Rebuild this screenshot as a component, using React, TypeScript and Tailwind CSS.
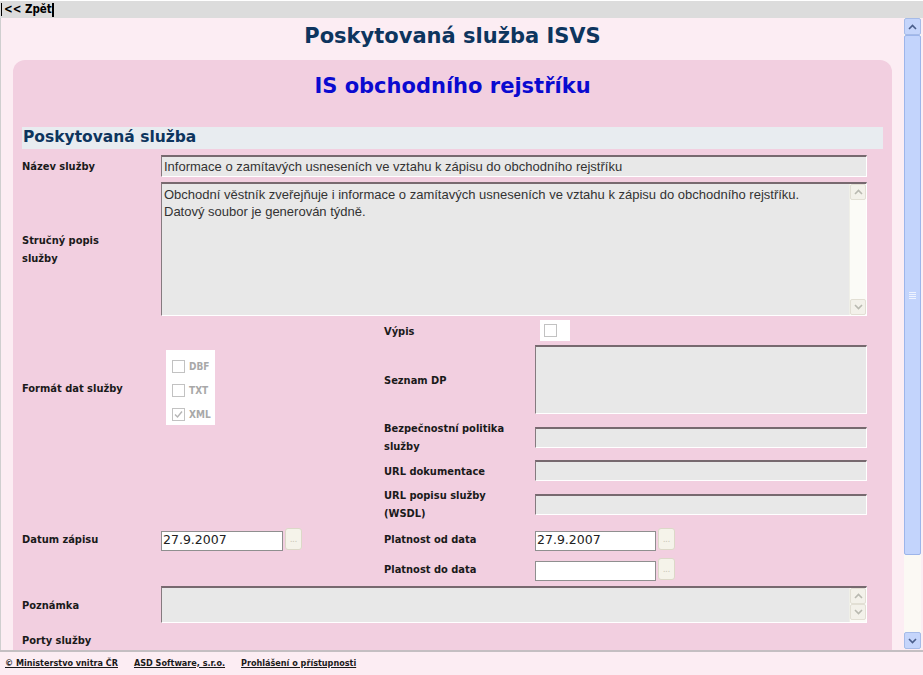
import React from 'react';

const lbl =
  "font-['DejaVu_Sans_Condensed','DejaVu_Sans',sans-serif] font-bold text-[11px] leading-[18px] text-[#1a1a1a] pt-[2px]";
const grayBox =
  'bg-[#e8e8e8] border-t-2 border-l border-b border-r border-t-[#77696f] border-l-[#857a7f] border-b-white border-r-white';

function Chevron({ up, color = '#b9b9b0' }: { up?: boolean; color?: string }) {
  return (
    <svg width="9" height="6" viewBox="0 0 9 6">
      <path
        d={up ? 'M1 5 L4.5 1.5 L8 5' : 'M1 1 L4.5 4.5 L8 1'}
        fill="none"
        stroke={color}
        strokeWidth="1.6"
      />
    </svg>
  );
}

// disabled scroll bar inside a textarea
function InnerScroll({ split }: { split?: boolean }) {
  return (
    <div className="w-[17px] flex flex-col bg-[#fbfbf7] border-l border-[#efefe8]">
      <div className="h-[16px] flex items-center justify-center bg-[#f3f1ea] border border-[#e2dfd4] rounded-[2px]">
        <Chevron up />
      </div>
      {!split && <div className="flex-1" />}
      <div className="h-[16px] flex items-center justify-center bg-[#f3f1ea] border border-[#e2dfd4] rounded-[2px]">
        <Chevron />
      </div>
    </div>
  );
}

function DateField({ value, w }: { value: string; w: string }) {
  return (
    <div className="flex items-start gap-[2px]">
      <div
        className={`${w} h-[20px] mt-[3px] bg-white border border-[#8f8f8f] px-[1px] flex items-center font-['DejaVu_Sans',sans-serif] text-[12.5px] text-[#222]`}
      >
        {value}
      </div>
      <div className="w-[17px] h-[22px] bg-[#f5f3ea] border border-[#dcd8c8] rounded-[3px] flex items-center justify-center text-[9px] leading-none text-[#c8c4b4]">
        ...
      </div>
    </div>
  );
}

function Check({ checked }: { checked?: boolean }) {
  return (
    <div className="w-[13px] h-[13px] border border-[#c2c2c2] bg-white flex items-center justify-center">
      {checked && (
        <svg width="9" height="9" viewBox="0 0 9 9">
          <path d="M1 4.5 L3.5 7 L8 1.5" fill="none" stroke="#b5b5b5" strokeWidth="1.4" />
        </svg>
      )}
    </div>
  );
}

export default function App() {
  return (
    <div className="w-[923px] h-[675px] overflow-hidden bg-[#fcedf3] flex flex-col">
      {/* top bar */}
      <div className="h-[18px] bg-[#dcdcdc] border-t border-white flex items-center">
        <span className="ml-[1px] h-[13px] border-l border-black" />
        <span className="ml-[2px] font-['DejaVu_Sans_Condensed','DejaVu_Sans',sans-serif] font-bold text-[11.5px] text-black leading-none">
          &lt;&lt; Zpět
        </span>
        <span className="h-[14px] w-[2px] bg-black" />
      </div>

      <div className="flex h-[632px]">
        {/* content */}
        <div className="w-[904px] border-l border-[#cfcfcf] overflow-hidden px-[12px]">
          <h1 className="mt-[6px] h-[24px] text-center font-['DejaVu_Sans',sans-serif] font-bold text-[21px] leading-[24px] text-[#0d355e]">
            Poskytovaná služba ISVS
          </h1>

          <div className="mt-[12px] bg-[#f2cfe0] rounded-t-[12px] px-[9px] h-[700px]">
            <h2 className="pt-[12px] h-[40px] text-center font-['DejaVu_Sans',sans-serif] font-bold text-[21px] leading-[28px] text-[#0a0ad0]">
              IS obchodního rejstříku
            </h2>

            <div className="mt-[27px] h-[22px] bg-[#e8ecf0] pl-[1px] flex items-center font-['DejaVu_Sans',sans-serif] font-bold text-[15.5px] text-[#0d355e]">
              Poskytovaná služba
            </div>

            {/* Název služby */}
            <div className="mt-[6px] flex items-center">
              <div className={`w-[139px] ${lbl}`}>Název služby</div>
              <div
                className={`w-[706px] h-[22px] ${grayBox} px-[2px] flex items-center font-['Liberation_Sans',sans-serif] text-[13px] text-[#333]`}
              >
                Informace o zamítavých usneseních ve vztahu k zápisu do obchodního rejstříku
              </div>
            </div>

            {/* Stručný popis */}
            <div className="mt-[5px] flex items-center">
              <div className={`w-[139px] ${lbl}`}>
                Stručný popis
                <br />
                služby
              </div>
              <div className={`w-[706px] h-[134px] ${grayBox} flex`}>
                <div className="flex-1 px-[2px] pt-[2px] font-['Liberation_Sans',sans-serif] text-[13px] leading-[17px] text-[#333]">
                  Obchodní věstník zveřejňuje i informace o zamítavých usneseních ve vztahu k zápisu do
                  obchodního rejstříku.
                  <br />
                  Datový soubor je generován týdně.
                </div>
                <InnerScroll />
              </div>
            </div>

            {/* two column block */}
            <div className="flex h-[206px]">
              <div className="w-[362px] pt-[34px]">
                <div className="flex items-center h-[75px]">
                  <div className={`w-[144px] ${lbl}`}>Formát dat služby</div>
                  <div className="w-[49px] h-[75px] bg-white pl-[6px] pt-[10px] flex flex-col gap-[11px]">
                    {[
                      ['DBF', false],
                      ['TXT', false],
                      ['XML', true],
                    ].map(([t, c]) => (
                      <div key={t as string} className="flex items-center gap-[4px]">
                        <Check checked={c as boolean} />
                        <span className="font-['DejaVu_Sans_Condensed','DejaVu_Sans',sans-serif] font-bold text-[10px] leading-none text-[#a8a8a8]">
                          {t as string}
                        </span>
                      </div>
                    ))}
                  </div>
                </div>
              </div>

              <div className="flex flex-col">
                <div className="mt-[4px] h-[21px] flex items-center">
                  <div className={`w-[156px] ${lbl}`}>Výpis</div>
                  <div className="w-[30px] h-[21px] bg-white pl-[4px] flex items-center">
                    <Check />
                  </div>
                </div>
                <div className="mt-[4px] h-[69px] flex items-center">
                  <div className={`w-[151px] ${lbl}`}>Seznam DP</div>
                  <div className={`w-[332px] h-[69px] ${grayBox}`} />
                </div>
                <div className="mt-[5px] h-[36px] flex items-center">
                  <div className={`w-[151px] ${lbl}`}>
                    Bezpečnostní politika
                    <br />
                    služby
                  </div>
                  <div className={`w-[332px] h-[21px] ${grayBox}`} />
                </div>
                <div className="mt-[5px] h-[21px] flex items-center">
                  <div className={`w-[151px] ${lbl}`}>URL dokumentace</div>
                  <div className={`w-[332px] h-[21px] ${grayBox}`} />
                </div>
                <div className="mt-[5px] h-[36px] flex items-center">
                  <div className={`w-[151px] ${lbl}`}>
                    URL popisu služby
                    <br />
                    (WSDL)
                  </div>
                  <div className={`w-[332px] h-[21px] ${grayBox}`} />
                </div>
              </div>
            </div>

            {/* dates */}
            <div className="mt-[6px] h-[22px] flex">
              <div className="w-[362px] flex items-center">
                <div className={`w-[139px] ${lbl}`}>Datum zápisu</div>
                <DateField value="27.9.2007" w="w-[122px]" />
              </div>
              <div className="flex items-center">
                <div className={`w-[151px] ${lbl}`}>Platnost od data</div>
                <DateField value="27.9.2007" w="w-[121px]" />
              </div>
            </div>
            <div className="mt-[8px] h-[22px] flex">
              <div className="w-[362px]" />
              <div className="flex items-center">
                <div className={`w-[151px] ${lbl}`}>Platnost do data</div>
                <DateField value="" w="w-[121px]" />
              </div>
            </div>

            {/* Poznámka */}
            <div className="mt-[6px] flex items-center">
              <div className={`w-[139px] ${lbl}`}>Poznámka</div>
              <div className={`w-[706px] h-[37px] ${grayBox} flex`}>
                <div className="flex-1" />
                <InnerScroll split />
              </div>
            </div>

            <div className={`mt-[7px] ${lbl}`}>Porty služby</div>
          </div>
        </div>

        {/* page scroll bar */}
        <div className="w-[17px] h-[631px] flex flex-col bg-[#fbf9f4]">
          <div className="h-[17px] bg-[#c5d5fb] border border-[#a6bbe8] rounded-[2px] flex items-center justify-center">
            <Chevron up color="#4a5e8a" />
          </div>
          <div className="h-[520px] bg-[#c3d4fc] border border-[#9db5ea] rounded-[2px] flex items-center justify-center">
            <div className="flex flex-col gap-[1px]">
              <div className="w-[7px] h-[1px] bg-[#eef3fe]" />
              <div className="w-[7px] h-[1px] bg-[#eef3fe]" />
              <div className="w-[7px] h-[1px] bg-[#eef3fe]" />
              <div className="w-[7px] h-[1px] bg-[#eef3fe]" />
            </div>
          </div>
          <div className="flex-1" />
          <div className="h-[17px] bg-[#c5d5fb] border border-[#a6bbe8] rounded-[2px] flex items-center justify-center">
            <Chevron color="#4a5e8a" />
          </div>
        </div>
      </div>

      {/* footer */}
      <div className="h-[25px] border-t-2 border-[#c4bfc2] flex items-center gap-[16px] pl-[5px] font-['DejaVu_Sans_Condensed','DejaVu_Sans',sans-serif] font-bold text-[9px] text-[#1a1a1a]">
        <a className="underline">© Ministerstvo vnitra ČR</a>
        <a className="underline">ASD Software, s.r.o.</a>
        <a className="underline">Prohlášení o přístupnosti</a>
      </div>
    </div>
  );
}
